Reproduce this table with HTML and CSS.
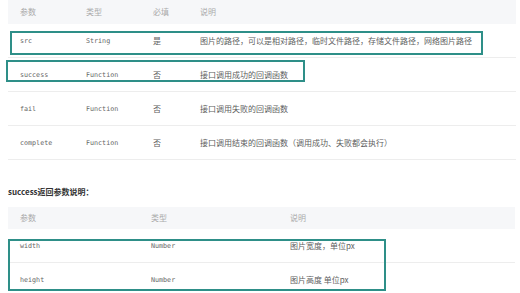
FILE: index.html
```html
<!DOCTYPE html>
<html lang="zh-CN">
<head>
<meta charset="utf-8">
<link rel="stylesheet" href="styles.css">
</head>
<body>
<div class="table t1">
  <div class="row head">
    <div class="c c1">参数</div>
    <div class="c c2">类型</div>
    <div class="c c3">必填</div>
    <div class="c c4">说明</div>
  </div>
  <div class="row">
    <div class="c c1 code">src</div>
    <div class="c c2 code">String</div>
    <div class="c c3">是</div>
    <div class="c c4">图片的路径，可以是相对路径，临时文件路径，存储文件路径，网络图片路径</div>
  </div>
  <div class="row">
    <div class="c c1 code">success</div>
    <div class="c c2 code">Function</div>
    <div class="c c3">否</div>
    <div class="c c4">接口调用成功的回调函数</div>
  </div>
  <div class="row">
    <div class="c c1 code">fail</div>
    <div class="c c2 code">Function</div>
    <div class="c c3">否</div>
    <div class="c c4">接口调用失败的回调函数</div>
  </div>
  <div class="row">
    <div class="c c1 code">complete</div>
    <div class="c c2 code">Function</div>
    <div class="c c3">否</div>
    <div class="c c4">接口调用结束的回调函数（调用成功、失败都会执行）</div>
  </div>
</div>

<h4 class="subtitle">success返回参数说明：</h4>

<div class="table t2">
  <div class="row head">
    <div class="c d1">参数</div>
    <div class="c d2">类型</div>
    <div class="c d3">说明</div>
  </div>
  <div class="row">
    <div class="c d1 code">width</div>
    <div class="c d2 code">Number</div>
    <div class="c d3">图片宽度，单位px</div>
  </div>
  <div class="row">
    <div class="c d1 code">height</div>
    <div class="c d2 code">Number</div>
    <div class="c d3">图片高度 单位px</div>
  </div>
</div>

<div class="mark m1"></div>
<div class="mark m2"></div>
<div class="mark m3"></div>
</body>
</html>
```

FILE: styles.css
```css
html, body {
  margin: 0;
  padding: 0;
  background: #ffffff;
}
body {
  position: relative;
  width: 520px;
  height: 293px;
  overflow: hidden;
  font-family: "Noto Sans CJK SC", "Noto Sans", sans-serif;
  font-size: 8px;
  color: #5e5e5e;
}
.table {
  margin-left: 8px;
  width: 508px;
}
.t2 {
  width: 507px;
}
.row {
  display: flex;
  align-items: center;
  height: 33px;
  border-bottom: 1px solid #ededed;
}
.row.head {
  height: 24px;
  border-bottom: none;
  background: #f6f7f9;
  color: #aaa;
}
.t2 .row.head {
  height: 22px;
}
.c {
  padding-left: 12px;
  box-sizing: border-box;
  white-space: nowrap;
  line-height: 12px;
}
.c1 { width: 66px; }
.c2 { width: 67px; }
.c3 { width: 47px; }
.c4 { flex: 1; }
.d1 { width: 131px; }
.d2 { width: 139px; }
.d3 { flex: 1; }
.code {
  font-family: "DejaVu Sans Mono", "Liberation Mono", monospace;
  font-size: 6.7px;
  color: #666;
}
.subtitle {
  margin: 26px 0 9px 8px;
  font-size: 8px;
  line-height: 12px;
  font-weight: bold;
  color: #333;
}
.mark {
  position: absolute;
  border: 2px solid #2e8f88;
  box-sizing: border-box;
}
.m1 { left: 10px; top: 31px; width: 473px; height: 24px; }
.m2 { left: 6px; top: 60px; width: 299px; height: 22px; }
.m3 { left: 8px; top: 239px; width: 378px; height: 52px; }
```
